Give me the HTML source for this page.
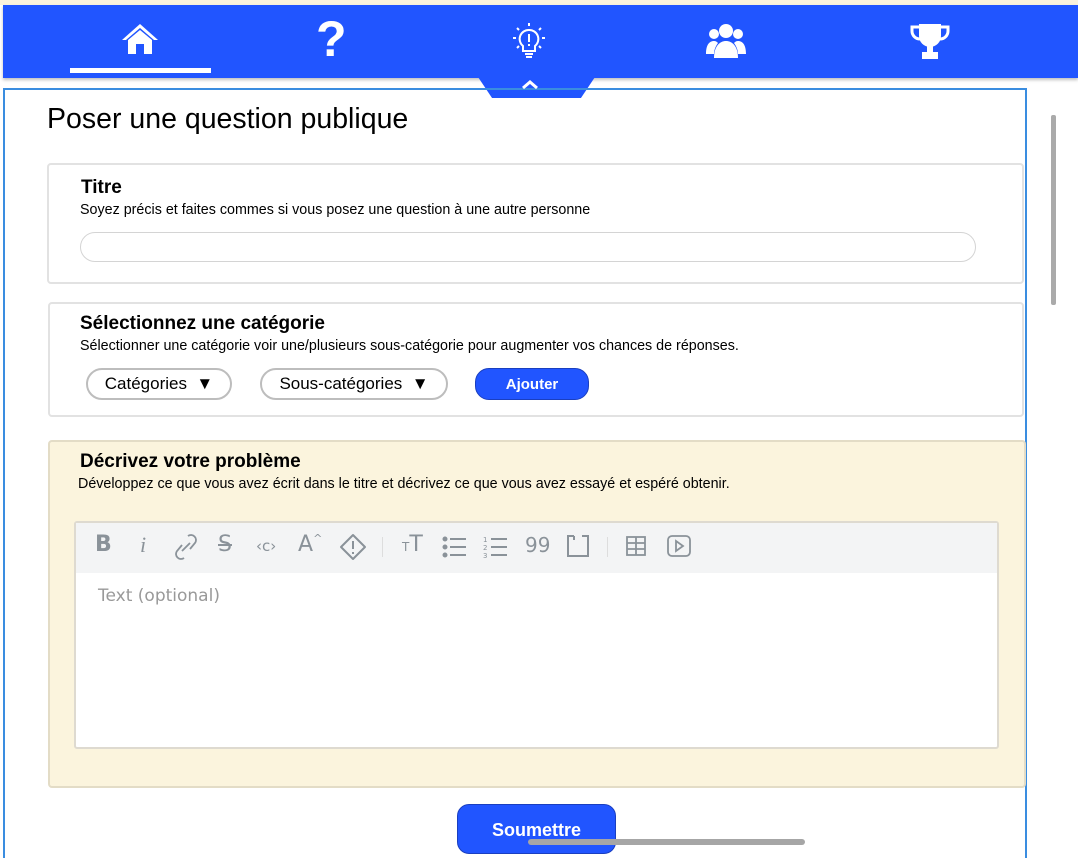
<!DOCTYPE html>
<html><head><meta charset="utf-8"><style>
*{box-sizing:border-box;margin:0;padding:0}
body{width:1078px;height:843px;overflow:hidden;background:#fff;font-family:"Liberation Sans",sans-serif;position:relative;color:#000}
.abs{position:absolute;white-space:nowrap}
.top{left:0;top:0;width:1078px;height:5px;background:#fbf3dd}
.nav{left:3px;top:5px;width:1075px;height:73px;background:#2155ff;box-shadow:0 2px 3px rgba(0,0,0,.25)}
.tab{left:478px;top:77px;width:117px;height:21px;background:#2155ff;clip-path:polygon(0 0,100% 0,88% 100%,12% 100%);}
.panel{left:3px;top:88px;width:1024px;height:770px;border:2px solid #3a8de0;border-bottom:none}
.card{border:2px solid #e2e2e2;border-radius:4px;background:#fff}
h1{font-size:28.5px;font-weight:400}
.h{font-size:19px;font-weight:700}
.s{font-size:14.3px}
.pill{border:2px solid #bdbdbd;border-radius:16px;height:32px;font-size:17px;display:flex;align-items:center;justify-content:center}
.tb{font-family:"DejaVu Sans",sans-serif;color:#8a9299;font-size:22px}
</style></head><body>
<div class="abs top"></div>
<div class="abs nav"></div>
<div class="abs tab"></div>
<svg class="abs" style="left:120px;top:22px" width="40" height="34" viewBox="0 0 40 34"><path d="M20 2 L38 18 L34 18 L20 6 L6 18 L2 18Z" fill="#fff"/><path d="M8 18 L20 8 L32 18 L32 32 L24 32 L24 22 L16 22 L16 32 L8 32Z" fill="#fff"/></svg>
<div class="abs" style="left:70px;top:68px;width:141px;height:5px;background:#fff"></div>
<div class="abs" style="left:316px;top:12px;font-size:50px;font-weight:700;color:#fff;line-height:54px">?</div>
<svg class="abs" style="left:510px;top:22px" width="38" height="40" viewBox="0 0 38 40" stroke="#fff" fill="none" stroke-width="2"><path d="M19 8a9 9 0 0 0-6 16v5h12v-5a9 9 0 0 0-6-16z"/><path d="M19 12v8M19 22v2M15 32h8M16 35h6"/><path d="M19 1v3M7 6l2 2M31 6l-2 2M3 16h3M32 16h3M7 26l2-2M31 26l-2-2"/></svg>
<svg class="abs" style="left:705px;top:22px" width="42" height="36" viewBox="0 0 42 36" fill="#fff"><circle cx="21" cy="9" r="7"/><circle cx="9" cy="12" r="5"/><circle cx="33" cy="12" r="5"/><path d="M9 36c0-12 6-17 12-17s12 5 12 17z"/><path d="M1 32c0-10 4-13 8-13 2 0 3 1 4 2-3 4-4 8-4 11z"/><path d="M41 32c0-10-4-13-8-13-2 0-3 1-4 2 3 4 4 8 4 11z"/></svg>
<svg class="abs" style="left:909px;top:22px" width="42" height="38" viewBox="0 0 42 38" fill="#fff"><path d="M10 2h22v12a11 11 0 0 1-22 0z"/><path d="M10 5H3v4a8 8 0 0 0 8 8" fill="none" stroke="#fff" stroke-width="3"/><path d="M32 5h7v4a8 8 0 0 1-8 8" fill="none" stroke="#fff" stroke-width="3"/><rect x="18" y="24" width="6" height="7"/><rect x="13" y="30" width="16" height="7"/></svg>
<div class="abs panel"></div>
<svg class="abs" style="left:521px;top:80px" width="18" height="10" viewBox="0 0 18 10"><path d="M2 8l7-6 7 6" stroke="#fff" stroke-width="3" fill="none"/></svg>
<div class="abs" style="left:1051px;top:115px;width:5px;height:190px;background:#aaa;border-radius:2px"></div>
<h1 class="abs" style="left:47px;top:103px">Poser une question publique</h1>

<div class="abs card" style="left:47px;top:163px;width:977px;height:121px"></div>
<div class="abs h" style="left:81px;top:177px">Titre</div>
<div class="abs s" style="left:80px;top:202px">Soyez précis et faites commes si vous posez une question à une autre personne</div>
<div class="abs" style="left:80px;top:232px;width:896px;height:30px;border:1px solid #d4d4d4;border-radius:15px"></div>

<div class="abs card" style="left:48px;top:302px;width:976px;height:115px"></div>
<div class="abs h" style="left:80px;top:313px">Sélectionnez une catégorie</div>
<div class="abs s" style="left:80px;top:338px">Sélectionner une catégorie voir une/plusieurs sous-catégorie pour augmenter vos chances de réponses.</div>
<div class="abs pill" style="left:86px;top:368px;width:146px">Catégories&nbsp;&nbsp;▼</div>
<div class="abs pill" style="left:260px;top:368px;width:188px">Sous-catégories&nbsp;&nbsp;▼</div>
<div class="abs" style="left:475px;top:368px;width:114px;height:32px;background:#2155ff;border:1px solid #1a3fc0;border-radius:14px;color:#fff;font-weight:700;font-size:15px;display:flex;align-items:center;justify-content:center">Ajouter</div>

<div class="abs" style="left:48px;top:440px;width:978px;height:348px;background:#fbf4dd;border:2px solid #e3dcc6;border-radius:4px"></div>
<div class="abs h" style="left:80px;top:451px">Décrivez votre problème</div>
<div class="abs s" style="left:78px;top:476px">Développez ce que vous avez écrit dans le titre et décrivez ce que vous avez essayé et espéré obtenir.</div>
<div class="abs" style="left:74px;top:521px;width:925px;height:228px;background:#fff;border:2px solid #dedad0;border-radius:3px"></div>
<div class="abs" style="left:76px;top:523px;width:921px;height:50px;background:#f3f4f5"></div>
<div class="abs tb" style="left:95px;top:532px;font-weight:700">B</div>
<div class="abs tb" style="left:140px;top:532px;font-style:italic;font-family:'Liberation Serif',serif">i</div>
<svg class="abs" style="left:175px;top:533px" width="22" height="28" viewBox="0 0 22 28" fill="none" stroke="#8a9299" stroke-width="1.8"><path d="M13 3a5 5 0 0 1 7 7l-5 6M9 25a5 5 0 0 1-7-7l5-6M7 18l8-8"/></svg>
<div class="abs tb" style="left:218px;top:532px;text-decoration:line-through">S</div>
<div class="abs tb" style="left:256px;top:537px;font-size:15px">‹c›</div>
<div class="abs tb" style="left:298px;top:532px">A<span style="font-size:11px;vertical-align:top">^</span></div>
<svg class="abs" style="left:339px;top:533px" width="28" height="28" viewBox="0 0 28 28" fill="none" stroke="#8a9299" stroke-width="2"><path d="M14 2l12 12-12 12L2 14z" stroke-linejoin="round"/><path d="M14 8v8M14 19v2"/></svg>
<div class="abs" style="left:382px;top:537px;width:1px;height:20px;background:#ddd"></div>
<div class="abs tb" style="left:402px;top:532px"><span style="font-size:12px">T</span>T</div>
<svg class="abs" style="left:442px;top:536px" width="26" height="22" viewBox="0 0 26 22" stroke="#8a9299" stroke-width="2" fill="#8a9299"><circle cx="3" cy="3" r="1.5"/><circle cx="3" cy="11" r="1.5"/><circle cx="3" cy="19" r="1.5"/><path d="M8 3h16M8 11h16M8 19h16"/></svg>
<svg class="abs" style="left:483px;top:535px" width="26" height="24" viewBox="0 0 26 24" stroke="#8a9299" stroke-width="2" fill="#8a9299"><text x="0" y="7" font-size="7" stroke="none" font-family="DejaVu Sans">1</text><text x="0" y="15" font-size="7" stroke="none" font-family="DejaVu Sans">2</text><text x="0" y="23" font-size="7" stroke="none" font-family="DejaVu Sans">3</text><path d="M8 4h16M8 12h16M8 20h16"/></svg>
<div class="abs tb" style="left:525px;top:533px;font-size:20px">99</div>
<svg class="abs" style="left:566px;top:534px" width="24" height="24" viewBox="0 0 24 24" fill="none" stroke="#8a9299" stroke-width="2"><path d="M8 2H2v20h20V2h-6M8 2v4"/></svg>
<div class="abs" style="left:607px;top:537px;width:1px;height:20px;background:#ddd"></div>
<svg class="abs" style="left:625px;top:535px" width="22" height="22" viewBox="0 0 22 22" fill="none" stroke="#8a9299" stroke-width="1.8"><rect x="2" y="2" width="18" height="18"/><path d="M2 8h18M2 14h18M11 2v18"/></svg>
<svg class="abs" style="left:666px;top:534px" width="26" height="24" viewBox="0 0 26 24" fill="none" stroke="#8a9299" stroke-width="1.8"><rect x="2" y="2" width="22" height="20" rx="4"/><path d="M10 7l7 5-7 5z"/></svg>
<div class="abs" style="left:98px;top:586px;color:#999;font-family:'DejaVu Sans',sans-serif;font-size:17px">Text (optional)</div>

<div class="abs" style="left:457px;top:804px;width:159px;height:50px;background:#2155ff;border:1px solid #1a3fc0;border-radius:12px;color:#fff;font-weight:700;font-size:18px;text-align:center;padding-top:15px">Soumettre</div>
<div class="abs" style="left:528px;top:839px;width:277px;height:6px;background:#a6a6a6;border-radius:3px"></div>
</body></html>
